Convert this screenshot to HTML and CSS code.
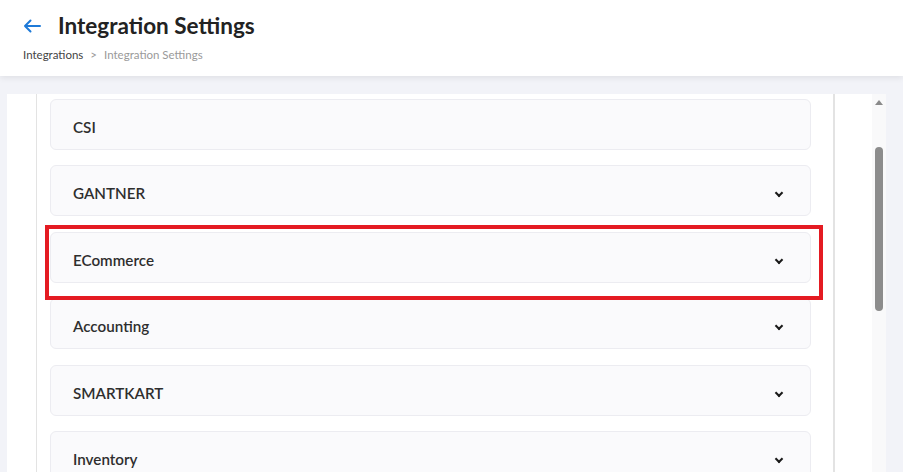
FILE: index.html
```html
<!DOCTYPE html>
<html>
<head>
<meta charset="utf-8">
<link rel="stylesheet" href="styles.css">
</head>
<body>
<header class="header">
  <div class="title-row">
    <svg class="back" width="18" height="14" viewBox="0 0 18 14"><path d="M17 7H2M7.5 1.5L2 7l5.5 5.5" fill="none" stroke="#1e7ad8" stroke-width="2" stroke-linecap="round" stroke-linejoin="round"/></svg>
    <h1 class="title">Integration Settings</h1>
  </div>
  <nav class="crumbs">
    <span class="crumb">Integrations</span>
    <span class="sep">&gt;</span>
    <span class="crumb current">Integration Settings</span>
  </nav>
</header>
<main class="main">
  <section class="panel">
    <div class="gutter"></div>
    <div class="list">
      <div class="card"><span class="name">CSI</span></div>
      <div class="card"><span class="name">GANTNER</span><span class="chev"></span></div>
      <div class="card highlighted"><span class="name">ECommerce</span><span class="chev"></span></div>
      <div class="card"><span class="name">Accounting</span><span class="chev"></span></div>
      <div class="card"><span class="name">SMARTKART</span><span class="chev"></span></div>
      <div class="card"><span class="name">Inventory</span><span class="chev"></span></div>
    </div>
    <div class="side"></div>
    <div class="scrollbar">
      <span class="up"></span>
      <span class="thumb"></span>
    </div>
  </section>
</main>
</body>
</html>
```
FILE: styles.css
```css
* { box-sizing: border-box; }
html, body { margin: 0; height: 100%; overflow: hidden; }
body {
  background: #f2f3f8;
  font-family: Lato, "Open Sans", sans-serif;
  color: #333;
}
.header {
  height: 76px;
  background: #fff;
  box-shadow: 0 2px 6px rgba(0,0,0,0.08);
  padding: 13px 0 0 23px;
  position: relative;
  z-index: 1;
}
.title-row { display: flex; align-items: center; height: 26px; }
.back { display: block; margin-top: 0; }
.title {
  margin: 0 0 0 17px;
  font-size: 22.5px;
  font-weight: 700;
  color: #222;
  line-height: 26px;
}
.crumbs {
  margin-top: 9px;
  font-size: 11.5px;
  display: flex;
  gap: 7px;
  color: #444;
}
.sep { color: #999; padding: 0; }
.crumb.current { color: #9a9a9a; }
.main { padding: 18px 0 0 7px; height: calc(100% - 76px); }
.panel {
  width: 879px;
  height: 100%;
  background: #fff;
  display: flex;
}
.gutter { width: 29px; flex: none; }
.list {
  width: 799px;
  flex: none;
  border-left: 1.5px solid #e3e3e3;
  border-right: 2px solid #e3e3e3;
  padding: 5px 22px 0 13px;
  display: flex;
  flex-direction: column;
  gap: 15.4px;
  position: relative;
}
.card {
  height: 51px;
  flex: none;
  background: #fafafc;
  border: 1px solid #ececf1;
  border-radius: 6px;
  display: flex;
  align-items: center;
  justify-content: space-between;
  padding: 5px 28px 0 22px;
  position: relative;
}
.name { font-size: 15.2px; font-weight: 600; color: #2e2e2e; }
.chev {
  width: 6px; height: 6px;
  border-right: 2px solid #1a1a1a;
  border-bottom: 2px solid #1a1a1a;
  transform: rotate(45deg);
  margin-top: 0;
}
.highlighted { z-index: 2; }
.highlighted::after {
  content: "";
  position: absolute;
  left: -6px; right: -13px; top: -8px; bottom: -18px;
  border: 4px solid #e41b22;
}
.side { width: 37px; flex: none; }
.scrollbar {
  width: 14px;
  flex: none;
  background: #f9f9fa;
  display: flex;
  flex-direction: column;
  align-items: center;
}
.up {
  margin-top: 6px;
  width: 0; height: 0;
  border-left: 4px solid transparent;
  border-right: 4px solid transparent;
  border-bottom: 5px solid #8a8a8a;
}
.thumb {
  margin-top: 42px;
  width: 8px;
  height: 164px;
  border-radius: 4px;
  background: #8c8c8c;
}
```
